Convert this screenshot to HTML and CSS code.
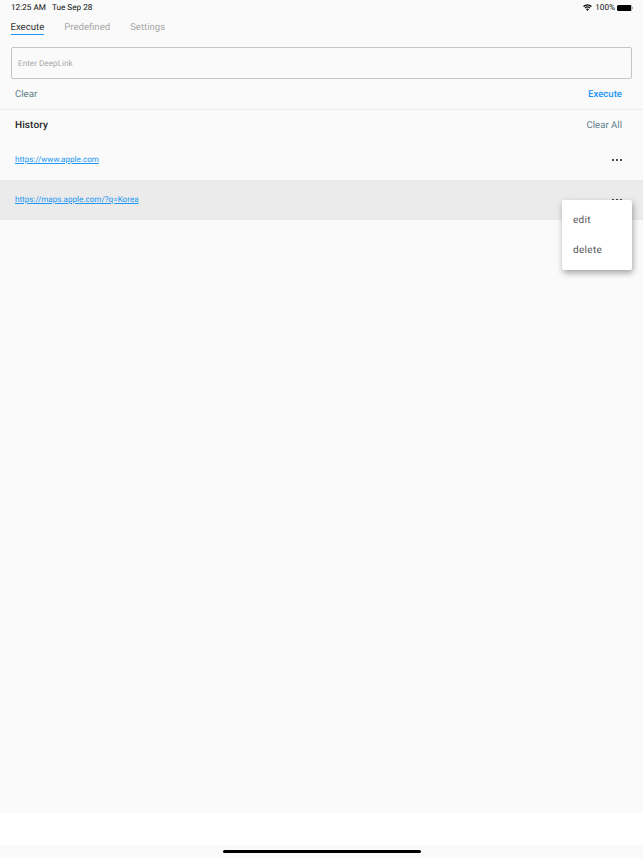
FILE: index.html
```html
<!DOCTYPE html>
<html lang="en">
<head>
  <meta charset="UTF-8" />
  <meta name="viewport" content="width=device-width, initial-scale=1.0" />
  <title>DeepLink</title>
  <link rel="stylesheet" href="styles.css">
</head>
<body>
  <div class="status-bar">
    <div class="status-time"><span>12:25 AM</span><span>Tue Sep 28</span></div>
    <div class="status-right">
      <svg class="wifi" width="9" height="7" viewBox="0 0 20 15">
        <path d="M10 15 6.6 11.3a5 5 0 0 1 6.8 0z" />
        <path d="M5.3 9.9 3.4 7.9a9.8 9.8 0 0 1 13.2 0l-1.9 2a7 7 0 0 0-9.4 0z" />
        <path d="M2.1 6.5 0 4.4a14.6 14.6 0 0 1 20 0l-2.1 2.1a11.7 11.7 0 0 0-15.8 0z" />
      </svg>
      <span>100%</span>
      <div class="battery"></div>
      <div class="battery-tip"></div>
    </div>
  </div>

  <nav class="tabs">
    <a class="tab active">Execute</a>
    <a class="tab">Predefined</a>
    <a class="tab">Settings</a>
  </nav>

  <div class="input-box">Enter DeepLink</div>

  <div class="actions">
    <a class="btn-muted">Clear</a>
    <a class="btn-primary">Execute</a>
  </div>

  <main class="content">
    <div class="history-head">
      <h2>History</h2>
      <a class="btn-muted">Clear All</a>
    </div>
    <div class="row">
      <a class="link">https://www.apple.com</a>
      <div class="dots"><i></i><i></i><i></i></div>
    </div>
    <div class="row selected">
      <a class="link">https://maps.apple.com/?q=Korea</a>
      <div class="dots"><i></i><i></i><i></i></div>
      <div class="menu">
        <div class="menu-item">edit</div>
        <div class="menu-item">delete</div>
      </div>
    </div>
  </main>

  <div class="bottom-white"></div>
  <div class="home-area"><div class="home-bar"></div></div>
</body>
</html>
```

FILE: styles.css
```css
* { margin: 0; padding: 0; box-sizing: border-box; }

html, body { height: 100%; }

body {
  display: flex;
  flex-direction: column;
  height: 858px;
  overflow: hidden;
  background: #fafafa;
  font-family: Roboto, "Liberation Sans", sans-serif;
  text-rendering: geometricPrecision;
  color: #222;
}

.status-bar {
  display: flex; justify-content: space-between; align-items: center;
  height: 15px;
  padding: 0 10px 0 11px;
  font-size: 8.2px;
  color: #111;
}
.status-time { display: flex; gap: 6px; }
.status-right { display: flex; align-items: center; gap: 2px; }
.wifi { fill: #111; margin-right: 1px; }
.battery {
  width: 15px; height: 6px;
  background: #000;
  border-right: 1.5px solid #bbb;
  border-radius: 1.5px;
}
.battery-tip { width: 1px; height: 2px; background: #aaa; margin-left: -2px; }

.tabs {
  display: flex; gap: 20px;
  height: 32px;
  padding: 7px 10.5px 0;
}
.tab {
  height: 13px;
  font-size: 9.6px; line-height: 12px;
  color: #a8a8a8;
}
.tab.active { color: #333; border-bottom: 1px solid #2196f3; }

.input-box {
  display: flex; align-items: center;
  height: 32px;
  margin: 0 11px;
  padding: 1px 0 0 6px;
  border: 1px solid #c4c4c4;
  border-radius: 2px;
  font-size: 8.2px;
  color: #a9a9a9;
}

.actions {
  display: flex; justify-content: space-between; align-items: center;
  height: 31px;
  padding: 0 21px 0 15px;
  border-bottom: 1px solid #ececec;
}
.btn-muted { font-size: 9.6px; color: #607d8b; }
.btn-primary { font-size: 9.6px; font-weight: 500; color: #2196f3; }

.content { flex: 1; }

.history-head {
  display: flex; justify-content: space-between; align-items: center;
  height: 30px;
  padding: 0 21px 0 15px;
}
.history-head h2 { font-size: 10px; font-weight: 500; letter-spacing: 0.1px; color: #222; }

.row {
  position: relative;
  display: flex; justify-content: space-between; align-items: center;
  height: 40px;
  padding: 0 21px 0 15px;
}
.row.selected { background: #ebebeb; }
.link { margin-bottom: 2px; font-size: 8.1px; color: #2196f3; text-decoration: underline; }
.dots { display: flex; gap: 1.5px; }
.dots i { width: 2.5px; height: 2.5px; border-radius: 50%; background: #111; }

.menu {
  position: absolute; top: 20px; right: 11px;
  width: 70px; height: 70px;
  padding: 5px 0;
  background: #fff;
  border-radius: 2px;
  box-shadow: 1px 3px 6px rgba(0, 0, 0, 0.35);
}
.menu-item {
  height: 30px; line-height: 30px;
  padding: 1px 0 0 11px;
  font-size: 10px; letter-spacing: 0.3px;
  color: #555;
}

.bottom-white { height: 32px; background: #fff; flex-shrink: 0; }
.home-area {
  display: flex; justify-content: center;
  height: 13px; flex-shrink: 0;
  padding-top: 4.5px;
}
.home-bar { width: 198px; height: 3px; background: #000; border-radius: 2px; }
```
